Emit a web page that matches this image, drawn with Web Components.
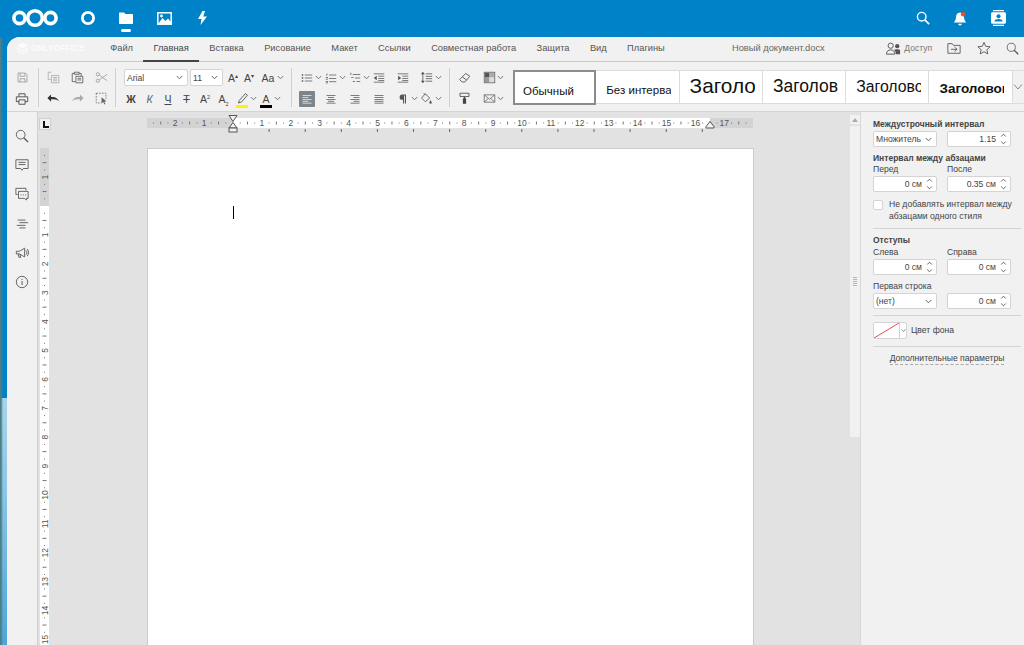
<!DOCTYPE html>
<html lang="ru">
<head>
<meta charset="utf-8">
<title>Новый документ.docx</title>
<style>
  html,body{margin:0;height:645px;overflow:hidden;background:#0082c9;}
  body{font-family:"Liberation Sans",Arial,sans-serif;color:#444;}
</style>
</head>
<body>
<nc-header></nc-header>
<oo-shell>
  <oo-tabs></oo-tabs>
  <oo-toolbar></oo-toolbar>
  <oo-workspace>
    <oo-sidebar></oo-sidebar>
    <oo-canvas></oo-canvas>
    <oo-scrollbar></oo-scrollbar>
    <oo-panel></oo-panel>
  </oo-workspace>
</oo-shell>

<script>
(function(customElements){
  'use strict';

  const S='fill="none" stroke="currentColor" stroke-width="1"';
  const ICONS={
    save:`<g ${S}><path d="M2.5 2.5h9l2 2v9h-11z"/><path d="M5 2.5v4h6v-4M5 13.5v-4h6v4"/></g>`,
    print:`<g ${S} stroke-width="1.3"><path d="M4.5 5V2h7v3M4.5 11H1.5V5.5h13V11h-3"/><path d="M4.5 9h7v5h-7z"/></g>`,
    copy:`<g ${S}><path d="M5.5 1.5h-4v9h3"/><path d="M5.5 5.5h9v9h-9z"/><path d="M7.5 8h5M7.5 10h5M7.5 12h5"/></g>`,
    paste:`<g ${S} stroke-width="1.3"><path d="M4 3H1.5v10H5"/><path d="M4 1.5h6V4H4zM10 3h2.5v3"/><path d="M6 6.5h8.5v8H6z"/><path d="M8 9h4.5M8 11h4.5"/></g>`,
    cut:`<g ${S}><circle cx="3.5" cy="4" r="2"/><circle cx="3.5" cy="12" r="2"/><path d="M5.3 5 15 12M5.3 11 15 4"/></g>`,
    undo:`<path fill="currentColor" d="M5 3v3.2c5-.6 8.500 1.300 10 5.800-2.300-3-5-3.500-10-3V12L.5 7.500z"/>`,
    redo:`<path fill="currentColor" d="M11 3v3.2C6 5.600 2.500 7.500 1 12c2.300-3 5-3.500 10-3V12l4.500-4.500z"/>`,
    select:`<g ${S}><path stroke-dasharray="2 1.500" d="M1.500 1.500h12v7M1.500 1.500v12h6"/><path fill="currentColor" d="M8 6.500l6 5-2.600.4 1.400 3-1.200.5-1.400-3L8 14z" stroke="none"/></g>`,
    pen:`<g ${S}><path d="M4 10.500 11.500 2l2.500 2-7.500 8.500-3.500 1z"/></g>`,
    bullets:`<g fill="currentColor"><rect x="1" y="3" width="2" height="2"/><rect x="1" y="7" width="2" height="2"/><rect x="1" y="11" width="2" height="2"/><rect x="5" y="3.500" width="10" height="1"/><rect x="5" y="7.500" width="10" height="1"/><rect x="5" y="11.500" width="10" height="1"/></g>`,
    numbers:`<g fill="currentColor"><rect x="2" y="2" width="1" height="3"/><rect x="1" y="7" width="3" height="1"/><rect x="1" y="9" width="3" height="1"/><rect x="1" y="12" width="3" height="1"/><rect x="1" y="14" width="3" height="1"/><rect x="5.500" y="3.500" width="9.500" height="1"/><rect x="5.500" y="8" width="9.500" height="1"/><rect x="5.500" y="12.500" width="9.500" height="1"/></g>`,
    multi:`<g fill="currentColor"><rect x="2" y="1" width="1" height="3"/><rect x="5" y="3" width="10" height="1"/><rect x="3" y="7" width="3" height="1"/><rect x="8" y="7.500" width="7" height="1"/><rect x="5" y="12" width="3" height="1"/><rect x="10" y="12" width="5" height="1"/></g>`,
    outdent:`<g fill="currentColor"><rect x="1" y="2" width="14" height="1"/><rect x="7" y="5" width="8" height="1"/><rect x="7" y="8" width="8" height="1"/><rect x="7" y="11" width="8" height="1"/><rect x="1" y="13" width="14" height="1"/><path d="M1 8l4-3v6z"/></g>`,
    indent:`<g fill="currentColor"><rect x="1" y="2" width="14" height="1"/><rect x="7" y="5" width="8" height="1"/><rect x="7" y="8" width="8" height="1"/><rect x="7" y="11" width="8" height="1"/><rect x="1" y="13" width="14" height="1"/><path d="M5.500 8l-4-3v6z"/></g>`,
    spacing:`<g fill="currentColor"><rect x="7" y="3" width="8" height="1"/><rect x="7" y="6" width="8" height="1"/><rect x="7" y="9" width="8" height="1"/><rect x="7" y="12" width="8" height="1"/><rect x="3" y="3" width="1" height="10"/><path d="M3.500 1 6 4H1zM3.500 15 1 12h5z"/></g>`,
    left:`<g fill="currentColor"><rect x="2" y="3" width="12" height="1"/><rect x="2" y="5.500" width="8" height="1"/><rect x="2" y="8" width="12" height="1"/><rect x="2" y="10.500" width="8" height="1"/><rect x="2" y="13" width="12" height="1"/></g>`,
    center:`<g fill="currentColor"><rect x="2" y="3" width="12" height="1"/><rect x="4" y="5.500" width="8" height="1"/><rect x="2" y="8" width="12" height="1"/><rect x="4" y="10.500" width="8" height="1"/><rect x="2" y="13" width="12" height="1"/></g>`,
    right:`<g fill="currentColor"><rect x="2" y="3" width="12" height="1"/><rect x="6" y="5.500" width="8" height="1"/><rect x="2" y="8" width="12" height="1"/><rect x="6" y="10.500" width="8" height="1"/><rect x="2" y="13" width="12" height="1"/></g>`,
    justify:`<g fill="currentColor"><rect x="2" y="3" width="12" height="1"/><rect x="2" y="5.500" width="12" height="1"/><rect x="2" y="8" width="12" height="1"/><rect x="2" y="10.500" width="12" height="1"/><rect x="2" y="13" width="12" height="1"/></g>`,
    pilcrow:`<path fill="currentColor" d="M12 2H7a3.500 3.500 0 0 0 0 7h1v5h1.300V3.200h1.200V14H12z"/>`,
    shade:`<g ${S}><path d="M6.500 2 2 7.500l4.500 4.500L12 7.500z"/><path d="M4.500 1.500 7 4"/></g><path fill="currentColor" d="M13 10c1 1.500 1.500 2.200 1.500 3a1.500 1.500 0 0 1-3 0c0-.8.500-1.500 1.500-3z"/>`,
    eraser:`<g ${S} stroke-width="1.2"><path d="M2 10.500 9.500 3l5 3.500-6 7H5z"/><path d="M5.500 7.500l5 3.500"/></g>`,
    scheme:`<rect x="2" y="2" width="6" height="6" fill="#555"/><rect x="8" y="2" width="6" height="6" fill="#aaa"/><rect x="2" y="8" width="6" height="6" fill="#999"/><rect x="8" y="8" width="6" height="6" fill="#ddd"/><rect x="1.500" y="1.500" width="13" height="13" fill="none" stroke="#666"/>`,
    painter:`<path d="M2.500 1.500h11v4h-11z" fill="none" stroke="currentColor"/><path fill="currentColor" d="M7 6h2v2H7zM6 8h4v6.500H6z"/>`,
    mail:`<g ${S}><path d="M1.500 3.500h13v9h-13z"/><path d="M1.500 3.500 8 9l6.500-5.500M1.500 12.500l5-4.500M14.500 12.500l-5-4.500"/></g>`,
    search:`<g ${S} stroke-width="1.200"><circle cx="6.500" cy="6.500" r="5"/><path d="M10 10l5 5" stroke-width="1.600"/></g>`,
    comment:`<g ${S} stroke-width="1.200"><path d="M1 2h14v10H9.500L8 14l-1.500-2H1z"/><path d="M4 5h8M4 7.500h8"/></g>`,
    chat:`<g ${S} stroke-width="1.200"><path d="M3 8.500H1v-7h11.500V4"/><path d="M4 5h11v8h-2v2l-2-2H4z"/><path d="M6.500 9h.8M9 9h.8M11.500 9h.8" stroke-width="1.500"/></g>`,
    nav:`<g fill="currentColor"><rect x="3" y="3" width="9" height="1"/><rect x="5" y="6" width="10" height="1"/><rect x="2" y="9" width="10" height="1"/><rect x="5" y="12" width="7" height="1"/></g>`,
    speak:`<g ${S} stroke-width="1.200"><path d="M1.500 6h3.500l6-3.500v10L5 9H1.500z"/><path d="M3.500 9l1 4h2l-1-4"/><path d="M12.500 5c1.500 1 1.500 4 0 5"/><path d="M14 3.500c2 2 2 6 0 8"/></g>`,
    info:`<g ${S} stroke-width="1.100"><circle cx="8" cy="8" r="6.500"/></g><rect x="7.500" y="7" width="1.100" height="4.500" fill="currentColor"/><rect x="7.500" y="4.500" width="1.100" height="1.200" fill="currentColor"/>`,
    share:`<g ${S} stroke-width="1.100"><circle cx="5" cy="5" r="2.800"/><path d="M.5 14c0-3 2-4.500 4.500-4.500S9.500 11 9.500 14z"/></g><circle cx="12" cy="5.500" r="2.300" fill="currentColor"/><path fill="currentColor" d="M8.500 9.500c1-1 5.500-1 6.500 0v4.500h-4.500c0-2-.5-3.500-2-4.500z"/>`,
    move:`<g ${S} stroke-width="1.100"><path d="M1 3h5l1.500 2H15v9H1z"/><path d="M4.500 9.500h7M8.500 6.800l3 2.700-3 2.700"/></g>`,
    star:`<path ${S} stroke-width="1.200" d="M8 1.500l2 4.600 5 .5-3.800 3.300 1.200 4.900L8 12.300l-4.400 2.500 1.200-4.900L1 6.600l5-.5z"/>`
  };

  function icon(name,size){
    size=size||16;
    return `<svg width="${size}" height="${size}" viewBox="0 0 16 16" aria-hidden="true">${ICONS[name]}</svg>`;
  }
  const CHEV='<svg class="chev" width="7" height="5" viewBox="0 0 7 5"><path d="M.8 1 3.500 3.800 6.200 1" fill="none" stroke="currentColor"/></svg>';

  class NcHeader extends HTMLElement{
    constructor(){
      super();
      this.attachShadow({mode:'open'}).innerHTML=`<style>
        :host{display:flex;height:37px;background:#0082c9;color:#fff;align-items:center;padding:0 7px 0 12px;box-sizing:border-box;}
        .logo{width:47px;height:37px;margin-right:10px;}
        .cell{width:38px;height:37px;display:flex;align-items:center;justify-content:center;position:relative;}
        .cell svg{margin-top:-1px;}
        .dot{position:absolute;left:14px;top:29px;width:10px;height:3px;border-radius:2px;background:#fff;}
        .sp{flex:1;}
      </style>
      <svg class="logo" viewBox="0 0 47 37">
        <g fill="none" stroke="#fff" stroke-width="3.600">
          <circle cx="23" cy="18" r="7.300"/><circle cx="7.500" cy="18" r="5.600"/><circle cx="38.500" cy="18" r="5.600"/>
        </g>
      </svg>
      <div class="cell"><svg width="16" height="16" viewBox="0 0 16 16"><circle cx="8" cy="8" r="5.600" fill="none" stroke="#fff" stroke-width="2.800"/></svg></div>
      <div class="cell"><svg width="14" height="14" viewBox="0 0 14 14"><path fill="#fff" d="M0 2.500c0-.6.400-1 1-1h4l1.500 1.600H13c.6 0 1 .4 1 1V12c0 .6-.4 1-1 1H1c-.6 0-1-.4-1-1z"/></svg><span class="dot"></span></div>
      <div class="cell"><svg width="15" height="13" viewBox="0 0 15 13"><rect x=".8" y=".8" width="13.400" height="11.400" fill="none" stroke="#fff" stroke-width="1.500"/><path fill="#fff" d="M1 12 5.500 6l3 3 2.500-2.500L14 10v2z"/><circle cx="4.500" cy="4" r="1.400" fill="#fff"/></svg></div>
      <div class="cell"><svg style="margin-left:1px" width="9" height="14" viewBox="0 0 9 14"><path fill="#fff" d="M4.500 0 0 8h3.500L2.500 14 9 5.500H5.300L7 0z"/></svg></div>
      <div class="sp"></div>
      <div class="cell"><svg style="margin-left:2px" width="14" height="14" viewBox="0 0 16 16"><circle cx="6.500" cy="6.500" r="4.900" fill="none" stroke="#fff" stroke-width="1.600"/><path d="M10 10l5 5" stroke="#fff" stroke-width="2"/></svg></div>
      <div class="cell"><svg style="margin-top:1px" width="14" height="16" viewBox="0 0 16 18"><path fill="#fff" d="M8 1.500c3 0 4.500 2.500 4.500 5 0 3 1.500 5.500 2.500 6.500H1c1-1 2.500-3.500 2.500-6.500 0-2.500 1.500-5 4.500-5zM6 14.500h4c0 1.200-.9 2-2 2s-2-.8-2-2z"/><circle cx="11.500" cy="3.500" r="2.600" fill="#e9522c"/></svg></div>
      <div class="cell"><svg width="15" height="16" viewBox="0 0 15 16"><path fill="#fff" d="M2 0h11v1.300H2zM2 14.700h11V16H2zM1.500 2.300h12c.8 0 1.500.7 1.500 1.500v8.400c0 .8-.7 1.500-1.500 1.500h-12C.7 13.700 0 13 0 12.200V3.800c0-.8.700-1.500 1.500-1.500z"/><circle cx="7.500" cy="6.300" r="2" fill="#0082c9"/><path fill="#0082c9" d="M3.500 11.500c0-1.800 1.800-2.500 4-2.500s4 .7 4 2.500z"/></svg></div>`;
    }
  }

  class OoShell extends HTMLElement{
    constructor(){
      super();
      this.attachShadow({mode:'open'}).innerHTML=`<style>
        :host{display:block;height:608px;padding-left:7px;box-sizing:border-box;
          background:
            linear-gradient(90deg,#4b7f86 0,#4b7f86 1px,transparent 3px),
            linear-gradient(#0082c9 0,#0082c9 361px,#a9d4ea 361px,#8cc6e6 450px,#4da5da 608px);}
        .app{height:608px;display:flex;flex-direction:column;background:#f1f1f1;border-top-left-radius:13px;overflow:hidden;}
      </style><div class="app"><slot></slot></div>`;
    }
  }

  class OoTabs extends HTMLElement{
    constructor(){
      super();
      const tabs=['Файл','Главная','Вставка','Рисование','Макет','Ссылки','Совместная работа','Защита','Вид','Плагины'];
      this.attachShadow({mode:'open'}).innerHTML=`<style>
        :host{display:flex;height:25px;box-sizing:border-box;border-bottom:1px solid #cbcbcb;background:#f1f1f1;font-size:9.300px;color:#555;align-items:stretch;flex:none;}
        .brand{width:93px;display:flex;align-items:center;padding-left:10px;box-sizing:border-box;color:#fcfcfc;font-weight:bold;font-size:8.500px;gap:3px;margin-bottom:2px;}
        .tab{padding:0 10.200px;display:flex;align-items:center;white-space:nowrap;position:relative;margin-bottom:2px;}
        .on{color:#444;}
        .on::after{content:"";position:absolute;left:0;right:0;bottom:-3px;height:2px;background:#444;}
        .title{margin-left:57px;display:flex;align-items:center;color:#666;margin-bottom:2px;white-space:nowrap;}
        .right{margin-left:auto;display:flex;align-items:center;margin-bottom:2px;}
        .right span.i{display:flex;align-items:center;justify-content:center;color:#555;}
        .share{font-size:8.500px;color:#777;margin:0 15px 0 3px;}
      </style>
      <div class="brand"><svg width="11" height="11" viewBox="0 0 11 11"><path fill="#fcfcfc" d="M5.500 0 11 2.700 5.500 5.400 0 2.700zM0 4.500l5.500 2.700L11 4.500l-0 1.500L5.500 8.700 0 6zM0 7.500l5.500 2.700L11 7.500V9l-5.500 2L0 9z"/></svg><span>ONLYOFFICE</span></div>
      ${tabs.map(t=>`<div class="tab${t==='Главная'?' on':''}">${t}</div>`).join('')}
      <div class="title">Новый документ.docx</div>
      <div class="right">
        <span class="i">${icon('share',15)}</span><span class="share">Доступ</span>
        <span class="i" style="width:14px;margin-right:16px">${icon('move',14)}</span>
        <span class="i" style="width:14px;margin-right:15px">${icon('star',14)}</span>
        <span class="i" style="width:13px;margin-right:5px">${icon('search',13)}</span>
      </div>`;
    }
  }

  class OoBtn extends HTMLElement{
    connectedCallback(){
      if(this.shadowRoot) return;
      const w=this.getAttribute('w')||'24';
      const name=this.getAttribute('icon');
      const size=this.getAttribute('size')||'13';
      const col=this.getAttribute('col');
      const bar=this.getAttribute('bar');
      this.attachShadow({mode:'open'}).innerHTML=`<style>
        :host{display:flex;align-items:center;width:${w}px;height:21px;flex:none;color:${col||'#444'};font-size:10.500px;}
        .ic{display:flex;width:${this.getAttribute('iw')||16}px;height:16px;align-items:center;justify-content:center;position:relative;flex:none;}
        :host([active]) .ic{background:#7d858c;color:#f1f1f1;border-radius:1px;}
        .bar{position:absolute;left:2px;right:2px;bottom:-1px;height:3px;}
        .chev{color:#777;flex:none;}
      </style><span class="ic">${name?icon(name,+size):''}<slot></slot>${bar?`<span class="bar" style="background:${bar}"></span>`:''}</span>${this.hasAttribute('chev')?CHEV:''}`;
    }
  }

  class OoCombo extends HTMLElement{
    connectedCallback(){
      if(this.shadowRoot) return;
      this.attachShadow({mode:'open'}).innerHTML=`<style>
        :host{display:flex;align-items:center;justify-content:space-between;box-sizing:border-box;width:${this.getAttribute('w')||64}px;height:${this.getAttribute('h')||16}px;background:#fff;border:1px solid #d4d4d4;border-radius:2px;font-size:8.600px;color:#444;padding:0 4px 0 2px;flex:none;}
        .chev{color:#666;}
      </style><span><slot></slot></span>${CHEV}`;
    }
  }

  class OoToolbar extends HTMLElement{
    constructor(){
      super();
      this.attachShadow({mode:'open'}).innerHTML=`<style>
        :host{display:flex;height:50px;box-sizing:border-box;border-bottom:1px solid #d4d4d4;background:#f1f1f1;padding-top:5px;flex:none;}
        .sep{width:1px;height:39px;margin-top:1px;background:#d0d0d0;flex:none;}
        .grid{display:grid;grid-auto-rows:21px;}
        .g1{grid-template-columns:30px;width:31px;justify-items:center;}
        .g1 oo-btn{justify-content:center;}
        .g2{grid-template-columns:repeat(3,24px);margin-left:6px;width:70px;}
        .font{margin-left:8px;width:167px;}
        .r{display:flex;height:21px;align-items:center;}
        .para{grid-template-columns:repeat(6,24px);margin-left:6.500px;width:150.500px;}
        .last{grid-template-columns:repeat(2,25px);margin-left:6px;width:50px;}
        .t{display:block;text-align:center;line-height:16px;width:100%;white-space:nowrap;}
        .b{font-weight:bold;}.i{font-style:italic;color:#666;}.u{text-decoration:underline;}.s{text-decoration:line-through;}
        sup,sub{font-size:5.500px;line-height:0;}
        oo-gallery{margin-left:7px;margin-top:3px;}
      </style>
      <div class="grid g1">
        <oo-btn icon="save" w="16" col="#999"></oo-btn>
        <oo-btn icon="print" w="16" size="14"></oo-btn>
      </div>
      <div class="sep"></div>
      <div class="grid g2">
        <oo-btn icon="copy" col="#aaa"></oo-btn><oo-btn icon="paste" col="#555"></oo-btn><oo-btn icon="cut" col="#999"></oo-btn>
        <oo-btn icon="undo" col="#333"></oo-btn><oo-btn icon="redo" col="#aaa"></oo-btn><oo-btn icon="select" col="#666"></oo-btn>
      </div>
      <div class="sep"></div>
      <div class="font">
        <div class="r">
          <oo-combo w="64" h="17">Arial</oo-combo><oo-combo w="33" h="17" style="margin:0 2px">11</oo-combo>
          <oo-btn w="16"><span class="t">A<sup>▴</sup></span></oo-btn>
          <oo-btn w="16"><span class="t">A<sup>▾</sup></span></oo-btn>
          <oo-btn chev w="26" iw="17" style="margin-left:2.500px"><span class="t">Aa</span></oo-btn>
        </div>
        <div class="r" style="margin-left:-1px">
          <oo-btn w="18.500"><span class="t b">Ж</span></oo-btn>
          <oo-btn w="18.500"><span class="t i">К</span></oo-btn>
          <oo-btn w="18.500"><span class="t u">Ч</span></oo-btn>
          <oo-btn w="18.500"><span class="t s">Т</span></oo-btn>
          <oo-btn w="18.500"><span class="t">A<sup>2</sup></span></oo-btn>
          <oo-btn w="18.500"><span class="t">A<sub>2</sub></span></oo-btn>
          <oo-btn icon="pen" chev w="24" bar="#fff200"></oo-btn>
          <oo-btn chev w="24" bar="#000"><span class="t">A</span></oo-btn>
        </div>
      </div>
      <div class="sep"></div>
      <div class="grid para">
        <oo-btn icon="bullets" size="12" chev col="#555"></oo-btn><oo-btn icon="numbers" size="12" chev col="#555"></oo-btn><oo-btn icon="multi" size="12" chev col="#555"></oo-btn>
        <oo-btn icon="outdent" size="12" col="#555"></oo-btn><oo-btn icon="indent" size="12" col="#555"></oo-btn><oo-btn icon="spacing" size="13" chev col="#555"></oo-btn>
        <oo-btn icon="left" size="12" active></oo-btn><oo-btn icon="center" size="12" col="#555"></oo-btn><oo-btn icon="right" size="12" col="#555"></oo-btn>
        <oo-btn icon="justify" size="12" col="#555"></oo-btn><oo-btn icon="pilcrow" size="12" chev col="#555"></oo-btn><oo-btn icon="shade" chev col="#555"></oo-btn>
      </div>
      <div class="sep"></div>
      <div class="grid last">
        <oo-btn icon="eraser" w="25"></oo-btn><oo-btn icon="scheme" chev w="25"></oo-btn>
        <oo-btn icon="painter" w="25"></oo-btn><oo-btn icon="mail" chev w="25" col="#666"></oo-btn>
      </div>
      <oo-gallery></oo-gallery>`;
    }
  }

  class OoGallery extends HTMLElement{
    constructor(){
      super();
      const items=[
        ['Обычный','font-size:11.500px;padding-top:6px;padding-left:8px;border:2px solid #8c8c8c;margin-top:-1px;height:35px;'],
        ['Без интерва','font-size:11.500px;padding-top:6px;padding-left:10px;'],
        ['Заголо','font-size:20.800px;padding-left:10px;padding-bottom:3px;'],
        ['Заголов','font-size:17.500px;padding-left:10px;padding-bottom:2px;'],
        ['Заголово','font-size:15.800px;padding-left:10px;'],
        ['Заголовок','font-size:13.500px;font-weight:bold;padding-left:10px;padding-top:2px;']
      ];
      this.attachShadow({mode:'open'}).innerHTML=`<style>
        :host{display:flex;height:34px;background:#fff;flex:1;color:#111;box-sizing:border-box;border-top:1px solid #dcdcdc;border-bottom:1px solid #dcdcdc;}
        .it{width:83.300px;box-sizing:border-box;border-right:1px solid #dcdcdc;display:flex;align-items:center;flex:none;}
        .in{overflow:hidden;white-space:nowrap;width:65px;}
        .more{flex:1;background:#f1f1f1;display:flex;align-items:center;justify-content:center;color:#888;}
      </style>
      ${items.map(i=>`<div class="it" style="${i[1]}"><div class="in">${i[0]}</div></div>`).join('')}
      <div class="more"><svg width="10" height="6" viewBox="0 0 10 6"><path d="M1 .5 5 5 9 .5" fill="none" stroke="currentColor"/></svg></div>`;
    }
  }

  class OoWorkspace extends HTMLElement{
    constructor(){
      super();
      this.attachShadow({mode:'open'}).innerHTML=`<style>
        :host{display:flex;flex:1;min-height:0;background:#e2e2e2;}
      </style><slot></slot>`;
    }
  }

  class OoSidebar extends HTMLElement{
    constructor(){
      super();
      const list=['search','comment','chat','nav','speak','info'];
      this.attachShadow({mode:'open'}).innerHTML=`<style>
        :host{display:flex;flex-direction:column;align-items:center;width:31px;box-sizing:border-box;background:#f1f1f1;border-right:1px solid #cfcfcf;padding-top:17px;gap:15.200px;color:#555;flex:none;}
        svg{display:block;}
      </style>${list.map(n=>icon(n,14)).join('')}`;
    }
  }

  class OoCanvas extends HTMLElement{
    constructor(){
      super();
      this.attachShadow({mode:'open'}).innerHTML=`<style>
        :host{display:grid;grid-template-columns:109px 607px;grid-template-rows:10px 1fr;row-gap:20px;padding-top:6px;box-sizing:border-box;width:812px;flex:none;overflow:hidden;background:#e2e2e2;}
        .corner{width:10px;height:10px;margin-left:1px;border:1px solid #cfcfcf;background:#f1f1f1;box-sizing:content-box;display:flex;align-items:center;justify-content:center;}
      </style>
      <div class="corner"><svg width="7" height="7" viewBox="0 0 7 7"><path d="M1 0h2v5h4v2H1z" fill="#111"/></svg></div>
      <oo-hruler></oo-hruler>
      <oo-vruler></oo-vruler>
      <oo-page></oo-page>`;
    }
  }

  const CM=28.9;

  class OoHruler extends HTMLElement{
    constructor(){
      super();
      const zero=86, end=563, w=606;
      let s='';
      for(let q=-11;q*CM/4+zero<w;q++){
        const x=zero+q*CM/4;
        if(q===0) continue;
        if(q%4===0){
          s+=`<text x="${x}" y="8" text-anchor="middle" font-size="8.500" fill="#555">${Math.abs(q/4)}</text>`;
        }else if(q%2===0){
          s+=`<rect x="${x-.5}" y="3.500" width="1" height="3" fill="#777"/>`;
        }else{
          s+=`<rect x="${x-.5}" y="4.500" width="1" height="1" fill="#777"/>`;
        }
      }
      let tabs='';
      for(let x=zero+36.100;x<end-3;x+=36.100){
        tabs+=`<rect x="${x-.5}" y="11" width="1" height="3" fill="#666"/>`;
      }
      this.attachShadow({mode:'open'}).innerHTML=`<style>
        :host{display:block;height:10px;width:606px;}
        svg{display:block;overflow:visible;font-family:"Liberation Sans",Arial,sans-serif;}
      </style>
      <svg width="${w}" height="10" viewBox="0 0 ${w} 10">
        <rect width="${w}" height="10" fill="#d3d3d3"/>
        <rect x="${zero}" width="${end-zero}" height="10" fill="#fff"/>
        ${s}${tabs}
        <path d="M${zero-4} -2.500h8L${zero} 3.500z M${zero} 4.500l4 5.500h-8z" fill="#f1f1f1" stroke="#555"/>
        <rect x="${zero-4}" y="10" width="8" height="4" fill="#f1f1f1" stroke="#555"/>
        <path d="M${end} 3.500l4 5v1.500h-8v-1.500z" fill="#f1f1f1" stroke="#555"/>
      </svg>`;
    }
  }

  class OoVruler extends HTMLElement{
    constructor(){
      super();
      const zero=58, h=500, cx=4.500;
      let s='';
      for(let q=-7;q*CM/4+zero<h;q++){
        const y=zero+q*CM/4;
        if(q===0) continue;
        if(q%4===0){
          s+=`<text x="0" y="0" transform="translate(${cx+3} ${y}) rotate(-90)" text-anchor="middle" font-size="8.500" fill="#555">${Math.abs(q/4)}</text>`;
        }else if(q%2===0){
          s+=`<rect x="2.500" y="${y-.5}" width="4" height="1" fill="#777"/>`;
        }else{
          s+=`<rect x="4" y="${y-.5}" width="1" height="1" fill="#777"/>`;
        }
      }
      this.attachShadow({mode:'open'}).innerHTML=`<style>
        :host{display:block;width:9px;margin-left:2px;}
        svg{display:block;font-family:"Liberation Sans",Arial,sans-serif;}
      </style>
      <svg width="9" height="${h}" viewBox="0 0 9 ${h}">
        <rect width="9" height="${h}" fill="#fff"/>
        <rect width="9" height="${zero}" fill="#d3d3d3"/>
        ${s}
      </svg>`;
    }
  }

  class OoPage extends HTMLElement{
    constructor(){
      super();
      this.attachShadow({mode:'open'}).innerHTML=`<style>
        :host{display:block;width:607px;height:600px;box-sizing:border-box;background:#fff;border:1px solid #ccc;padding:57px 0 0 85px;}
        .caret{width:1px;height:13px;background:#000;}
      </style><div class="caret"></div>`;
    }
  }

  class OoScrollbar extends HTMLElement{
    constructor(){
      super();
      this.attachShadow({mode:'open'}).innerHTML=`<style>
        :host{display:flex;flex-direction:column;width:10px;flex:none;position:relative;padding-top:3px;box-sizing:border-box;}
        .btn{height:9px;background:#f1f1f1;display:flex;align-items:center;justify-content:center;}
        .thumb{height:311px;margin-top:2px;background:#f1f1f1;}
        .grip{position:absolute;left:3px;top:165px;width:4px;height:9px;background:repeating-linear-gradient(#b5b5b5 0 1px,transparent 1px 2px);}
      </style>
      <div class="btn"><svg width="6" height="4" viewBox="0 0 6 4"><path d="M3 0l3 4H0z" fill="#aaa"/></svg></div>
      <div class="thumb"></div>
      <div class="grip"></div>`;
    }
  }

  class OoSpin extends HTMLElement{
    constructor(){
      super();
      this.attachShadow({mode:'open'}).innerHTML=`<style>
        :host{display:flex;align-items:center;justify-content:flex-end;box-sizing:border-box;width:64px;height:16px;background:#fff;border:1px solid #d4d4d4;border-radius:2px;font-size:8.600px;color:#444;padding-right:3px;gap:4px;}
        svg{flex:none;}
      </style><span><slot></slot></span>
      <svg width="7" height="12" viewBox="0 0 7 12"><path d="M1.200 3.500 3.500 1.200 5.800 3.500M1.200 8.500 3.500 10.800 5.800 8.500" fill="none" stroke="#666"/></svg>`;
    }
  }

  class OoPanel extends HTMLElement{
    constructor(){
      super();
      this.attachShadow({mode:'open'}).innerHTML=`<style>
        :host{display:block;flex:1;box-sizing:border-box;background:#f1f1f1;border-left:1px solid #d8d8d8;padding:7px 3px 0 12px;font-size:8.600px;color:#444;line-height:11px;}
        h4{margin:0;font-size:8.500px;line-height:11px;}
        .two{display:grid;grid-template-columns:64px 64px;column-gap:10px;}
        .lbl{margin-bottom:1px;line-height:11px;height:11px;}
        .r1{margin-top:1px;}
        .mt{margin-top:6px;}
        .chk{display:flex;gap:6px;margin-top:8px;}
        .box{width:10px;height:10px;box-sizing:border-box;background:#fff;border:1px solid #d4d4d4;border-radius:2px;flex:none;}
        .chk div:last-child{line-height:12px;margin-top:-2px;white-space:nowrap;}
        hr{border:0;border-top:1px solid #d4d4d4;margin:0;}
        .color{display:flex;align-items:center;margin-top:6px;gap:4px;}
        .swatch{width:34px;height:17px;box-sizing:border-box;background:#fff;border:1px solid #d4d4d4;border-radius:2px;display:flex;align-items:center;}
        .swatch svg:first-child{flex:none;border-right:1px solid #d4d4d4;}
        .swatch .chev{margin-left:1px;color:#555;}
        .more{text-align:center;margin-top:6px;width:148px;}
        .more span{border-bottom:1px dashed #aaa;padding-bottom:1px;}
      </style>
      <h4>Междустрочный интервал</h4>
      <div class="two r1"><oo-combo>Множитель</oo-combo><oo-spin>1.15</oo-spin></div>
      <h4 class="mt">Интервал между абзацами</h4>
      <div class="two">
        <div class="lbl">Перед</div><div class="lbl">После</div>
        <oo-spin>0 см</oo-spin><oo-spin>0.35 см</oo-spin>
      </div>
      <div class="chk"><div class="box"></div><div>Не добавлять интервал между<br>абзацами одного стиля</div></div>
      <hr style="margin-top:6px">
      <h4 style="margin-top:6px">Отступы</h4>
      <div class="two" style="margin-top:1px">
        <div class="lbl">Слева</div><div class="lbl">Справа</div>
        <oo-spin>0 см</oo-spin><oo-spin>0 см</oo-spin>
      </div>
      <div class="lbl" style="margin-top:6px">Первая строка</div>
      <div class="two"><oo-combo>(нет)</oo-combo><oo-spin>0 см</oo-spin></div>
      <hr style="margin-top:6px">
      <div class="color">
        <div class="swatch"><svg width="25" height="15" viewBox="0 0 25 15"><path d="M0 15 25 0" stroke="#e8505b" stroke-width="1"/></svg>${CHEV}</div>
        <div>Цвет фона</div>
      </div>
      <hr style="margin-top:7px">
      <div class="more"><span>Дополнительные параметры</span></div>`;
    }
  }

  customElements.define('nc-header',NcHeader);
  customElements.define('oo-shell',OoShell);
  customElements.define('oo-tabs',OoTabs);
  customElements.define('oo-btn',OoBtn);
  customElements.define('oo-combo',OoCombo);
  customElements.define('oo-gallery',OoGallery);
  customElements.define('oo-toolbar',OoToolbar);
  customElements.define('oo-workspace',OoWorkspace);
  customElements.define('oo-sidebar',OoSidebar);
  customElements.define('oo-hruler',OoHruler);
  customElements.define('oo-vruler',OoVruler);
  customElements.define('oo-page',OoPage);
  customElements.define('oo-canvas',OoCanvas);
  customElements.define('oo-scrollbar',OoScrollbar);
  customElements.define('oo-spin',OoSpin);
  customElements.define('oo-panel',OoPanel);
})(window.customElements);
</script>
</body>
</html>
